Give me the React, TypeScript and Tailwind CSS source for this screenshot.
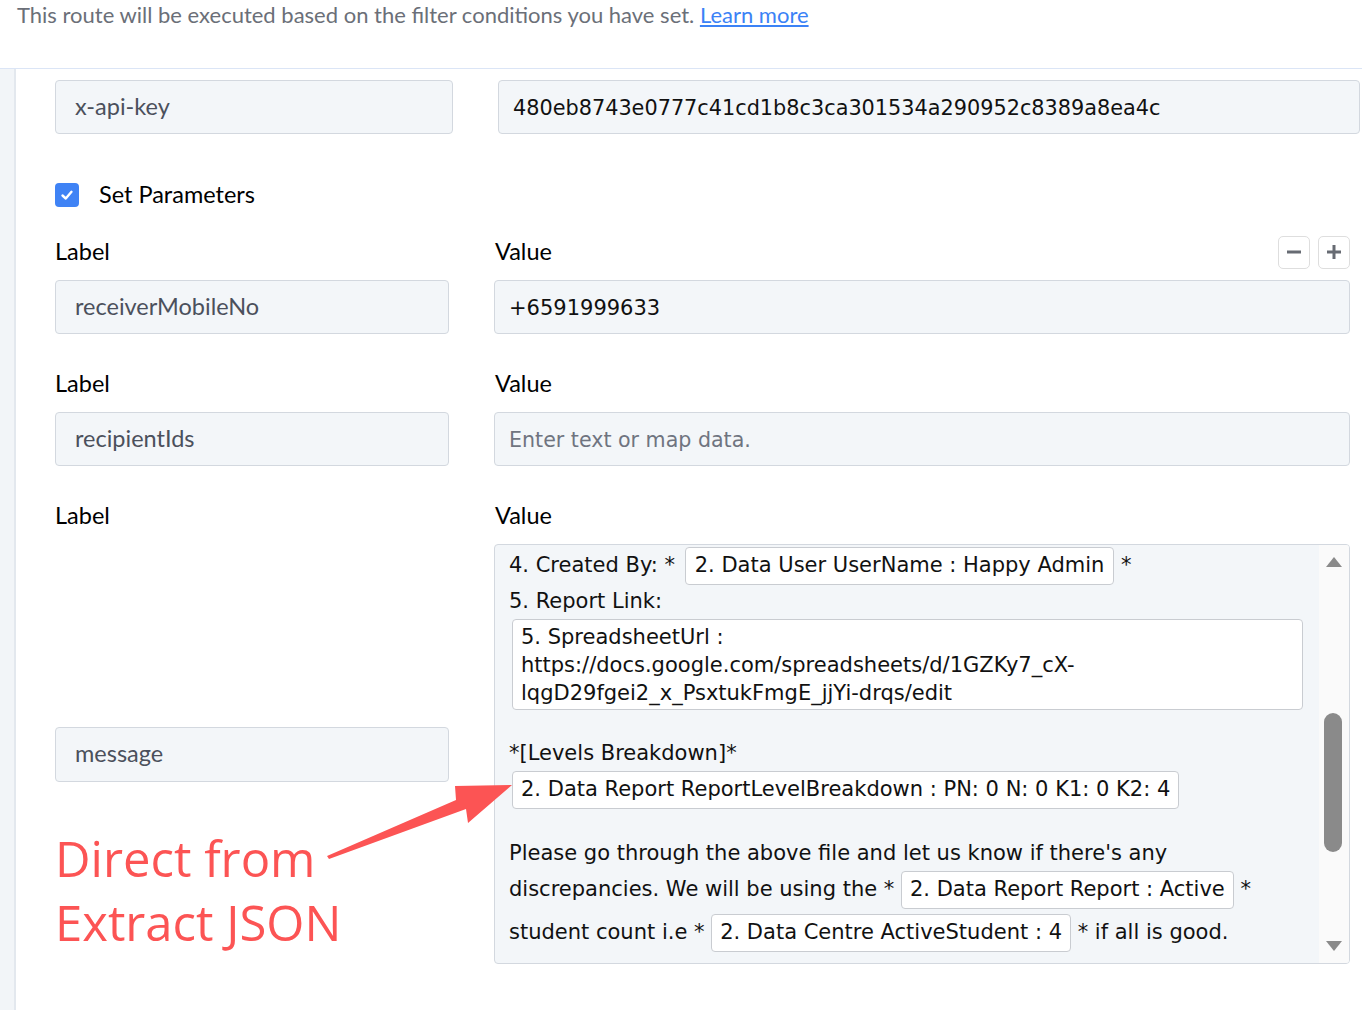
const ui = "font-['Lato',sans-serif]";
const mono = "font-['DejaVu_Sans',sans-serif]";

function Pill({ children, className = "" }: { children: React.ReactNode; className?: string }) {
  return (
    <span
      className={`inline-flex h-[38px] items-center whitespace-pre rounded-[4px] border border-[#c9ccd1] bg-white px-[8px] ${className}`}
    >
      {children}
    </span>
  );
}

function FieldLabel({ text }: { text: string }) {
  return <span className={`${ui} text-[23.5px] text-black`}>{text}</span>;
}

function KeyInput({ value }: { value: string }) {
  return (
    <div className="flex h-[54px] w-[394px] items-center rounded-[4px] border border-[#d3d8df] bg-[#f3f6f9] px-[19px]">
      <span className={`${ui} text-[23.5px] text-[#4b505c]`}>{value}</span>
    </div>
  );
}

function ValueInput({ value, placeholder }: { value?: string; placeholder?: string }) {
  return (
    <div className="flex h-[54px] w-[856px] items-center rounded-[4px] border border-[#d3d8df] bg-[#f3f6f9] px-[14px] pt-[3px]">
      {value ? (
        <span className={`${mono} text-[21px] text-[#111]`}>{value}</span>
      ) : (
        <span className={`${mono} text-[20.6px] text-[#6f7480]`}>{placeholder}</span>
      )}
    </div>
  );
}

function LabelRow({ controls }: { controls?: boolean }) {
  return (
    <div className="flex h-[32px] items-center">
      <div className="w-[439px]">
        <FieldLabel text="Label" />
      </div>
      <div className="flex w-[856px] items-center justify-between">
        <span className="pl-[1px]">
          <FieldLabel text="Value" />
        </span>
        {controls ? (
          <div className="flex gap-[8px]">
            <button className="flex h-[33px] w-[32px] items-center justify-center rounded-[5px] border border-[#dedede] bg-white">
              <svg width="16" height="16" viewBox="0 0 16 16">
                <line x1="1" y1="8" x2="15" y2="8" stroke="#676b73" strokeWidth="3" />
              </svg>
            </button>
            <button className="flex h-[33px] w-[32px] items-center justify-center rounded-[5px] border border-[#dedede] bg-white">
              <svg width="16" height="16" viewBox="0 0 16 16">
                <line x1="1" y1="8" x2="15" y2="8" stroke="#676b73" strokeWidth="3" />
                <line x1="8" y1="1" x2="8" y2="15" stroke="#676b73" strokeWidth="3" />
              </svg>
            </button>
          </div>
        ) : null}
      </div>
    </div>
  );
}

function MessageBox() {
  return (
    <div className="flex h-[420px] w-[856px] overflow-hidden rounded-[4px] border border-[#d3d8df] bg-[#f3f6f9]">
      <div className={`${mono} flex-1 pl-[14px] pt-[2px] text-[21px] text-[#111]`}>
        <div className="flex h-[37px] items-center">
          <span className="whitespace-pre">4. Created By: * </span>
          <Pill className="ml-[3px] h-[37px] px-[9px]">2. Data User UserName : Happy Admin</Pill>
          <span className="whitespace-pre"> *</span>
        </div>
        <div className="flex h-[35px] items-center">5. Report Link:</div>
        <div className="ml-[3px] h-[91px] w-[791px] rounded-[4px] border border-[#c9ccd1] bg-white px-[8px] py-[3px] leading-[28px]">
          <div>5. SpreadsheetUrl :</div>
          <div>https://docs.google.com/spreadsheets/d/1GZKy7_cX-</div>
          <div>lqgD29fgei2_x_PsxtukFmgE_jjYi-drqs/edit</div>
        </div>
        <div className="h-[26px]" />
        <div className="flex h-[35px] items-center">*[Levels Breakdown]*</div>
        <div className="flex">
          <Pill className="ml-[3px] h-[37px]">2. Data Report ReportLevelBreakdown : PN: 0 N: 0 K1: 0 K2: 4</Pill>
        </div>
        <div className="h-[27px]" />
        <div className="flex h-[35px] items-center">Please go through the above file and let us know if there's any</div>
        <div className="flex items-center">
          <span className="whitespace-pre">discrepancies. We will be using the * </span>
          <Pill>2. Data Report Report : Active</Pill>
          <span className="whitespace-pre"> *</span>
        </div>
        <div className="mt-[5px] flex items-center">
          <span className="whitespace-pre">student count i.e * </span>
          <Pill className="h-[37px]">2. Data Centre ActiveStudent : 4</Pill>
          <span className="whitespace-pre"> * if all is good.</span>
        </div>
      </div>
      <div className="flex w-[30px] flex-col items-center bg-[#fafafa] pb-[12px] pt-[12px]">
        <svg width="16" height="10" viewBox="0 0 16 10">
          <polygon points="8,0 16,10 0,10" fill="#8a8a8a" />
        </svg>
        <div className="ml-[-2px] mt-[146px] h-[139px] w-[18px] rounded-full bg-[#8a8a8a]" />
        <div className="flex-1" />
        <svg width="16" height="10" viewBox="0 0 16 10">
          <polygon points="0,0 16,0 8,10" fill="#8a8a8a" />
        </svg>
      </div>
    </div>
  );
}

export default function App() {
  return (
    <div className="relative h-[1010px] w-[1362px] overflow-hidden bg-white">
      <div className="h-[69px] border-b border-[#dbe5f6] pl-[17px] pt-[2px]">
        <p className={`${ui} text-[22px] leading-[26px] text-[#6b6f78]`}>
          This route will be executed based on the filter conditions you have set.{" "}
          <a href="#" className="text-[#3b82f6] underline">
            Learn more
          </a>
        </p>
      </div>

      <div className="flex h-[941px]">
        <div className="w-[16px] border-r-2 border-[#e3e8ee] bg-[#f2f5f8]" />
        <div className="flex-1 pl-[39px] pt-[11px]">
          <div className="flex gap-[45px]">
            <div className="flex h-[54px] w-[398px] items-center rounded-[4px] border border-[#d3d8df] bg-[#f3f6f9] px-[19px]">
              <span className={`${ui} text-[23.5px] text-[#4b505c]`}>x-api-key</span>
            </div>
            <div className="flex h-[54px] w-[862px] items-center rounded-[4px] border border-[#d3d8df] bg-[#f3f6f9] px-[14px] pt-[3px]">
              <span className={`${mono} text-[20.8px] text-[#111]`}>480eb8743e0777c41cd1b8c3ca301534a290952c8389a8ea4c</span>
            </div>
          </div>

          <label className="mt-[49px] flex h-[24px] items-center gap-[20px]">
            <span className="flex h-[24px] w-[24px] items-center justify-center rounded-[4px] bg-[#3f83f5]">
              <svg width="14" height="14" viewBox="0 0 14 14">
                <polyline points="2.5,7.5 5.8,10.5 11.5,3.8" fill="none" stroke="white" strokeWidth="2.4" strokeLinecap="round" strokeLinejoin="round" />
              </svg>
            </span>
            <span className={`${ui} text-[23.5px] text-black`}>Set Parameters</span>
          </label>

          <div className="mt-[29px]">
            <LabelRow controls />
          </div>
          <div className="mt-[12px] flex gap-[45px]">
            <KeyInput value="receiverMobileNo" />
            <ValueInput value="+6591999633" />
          </div>

          <div className="mt-[34px]">
            <LabelRow />
          </div>
          <div className="mt-[12px] flex gap-[45px]">
            <KeyInput value="recipientIds" />
            <ValueInput placeholder="Enter text or map data." />
          </div>

          <div className="mt-[34px]">
            <LabelRow />
          </div>
          <div className="mt-[12px] flex items-center gap-[45px]">
            <div className="flex h-[55px] w-[394px] items-center rounded-[4px] border border-[#d3d8df] bg-[#f3f6f9] px-[19px]">
              <span className={`${ui} text-[23.5px] text-[#4b505c]`}>message</span>
            </div>
            <MessageBox />
          </div>
        </div>
      </div>

      {/* annotation */}
      <div className="absolute left-[55px] top-[826px] font-['Open_Sans',sans-serif] text-[49px] leading-[64px] text-[#fc5454]">
        <div>Direct from</div>
        <div>Extract JSON</div>
      </div>
      <svg className="absolute left-0 top-0" width="1362" height="1010" viewBox="0 0 1362 1010">
        <polygon
          points="327,856 456,800 455,786 512,785 468,823 466,809 329,859"
          fill="#fc5454"
        />
      </svg>
    </div>
  );
}
